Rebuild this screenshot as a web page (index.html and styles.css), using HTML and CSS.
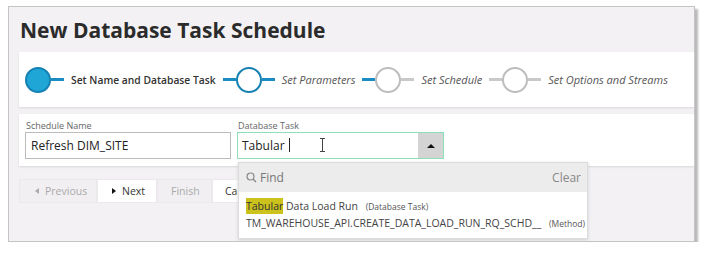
FILE: index.html
```html
<!DOCTYPE html>
<html>
<head>
<meta charset="utf-8">
<title>New Database Task Schedule</title>
<link rel="stylesheet" href="styles.css">
</head>
<body>
<div class="win">
    <h1>New Database Task Schedule</h1>

    <div class="panel steps">
        <div class="step done">
            <span class="dot"></span><span class="bar blue"></span>
            <span class="lbl">Set Name and Database Task</span>
        </div>
        <div class="step cur">
            <span class="bar blue"></span><span class="dot"></span><span class="bar blue"></span>
            <span class="lbl">Set Parameters</span>
        </div>
        <div class="step">
            <span class="bar blue"></span><span class="dot"></span><span class="bar"></span>
            <span class="lbl">Set Schedule</span>
        </div>
        <div class="step">
            <span class="bar"></span><span class="dot"></span><span class="bar"></span>
            <span class="lbl">Set Options and Streams</span>
        </div>
    </div>

    <div class="panel form">
        <div class="field">
            <label>Schedule Name</label>
            <div class="box">Refresh DIM_SITE</div>
        </div>
        <div class="field">
            <label>Database Task</label>
            <div class="box combo">
                <span class="val">Tabular<i class="caret"></i></span>
                <span class="ibeam"></span>
                <span class="btn"><i class="up"></i></span>
            </div>
        </div>
    </div>

    <div class="nav">
        <span class="nbtn off"><i class="tl"></i>Previous</span>
        <span class="nbtn"><i class="tr"></i>Next</span>
        <span class="nbtn off">Finish</span>
        <span class="nbtn">Cancel</span>
    </div>

    <div class="drop">
        <div class="find">
            <svg width="11" height="11" viewBox="0 0 11 11"><circle cx="4.5" cy="4.5" r="3.5" fill="none" stroke="#888" stroke-width="1.2"/><path d="M7 7l3 3" stroke="#888" stroke-width="1.4"/></svg>
            <span class="ph">Find</span>
            <span class="clr">Clear</span>
        </div>
        <div class="items">
            <div class="it"><mark>Tabular</mark> Data Load Run <small>(Database Task)</small></div>
            <div class="it">TM_WAREHOUSE_API.CREATE_DATA_LOAD_RUN_RQ_SCHD__ <small>(Method)</small></div>
        </div>
    </div>
</div>
</body>
</html>
```

FILE: styles.css
```css
body{ margin:0; background:#fff; font-family:"Open Sans","Noto Sans",sans-serif; color:#333;}
.win{ position:relative; margin:6px 0 0 8px; width:675px; height:234px; border:1px solid #c4c4c4; background:#f3f1f4; box-shadow:3px 3px 2px #b9b9b9; padding-left:10px;}
h1{ margin:0; padding:9px 0 0 1px; font-size:21px; line-height:28px; font-weight:bold; color:#2b2b2b;}
.panel{ background:#fff; box-shadow:0 1px 2px #d9d7da;}
.steps{ margin-top:8px; height:55px; display:flex; align-items:center; padding-left:6px;}
.step{ display:flex; align-items:center;}
.step + .step{ margin-left:7px;}
.dot{ width:22px; height:22px; border-radius:50%; border:2px solid #bdbdbd; background:#fff;}
.done .dot{ background:#20a6d6; border-color:#1581b2;}
.cur .dot{ border-color:#1581b2;}
.bar{ width:13px; height:3px; background:#c9c9c9;}
.bar.blue{ background:#1a8cc2;}
.lbl{ margin-left:7px; font-size:11px; font-style:italic; color:#555;}
.done .lbl{ font-style:normal; font-weight:600; font-size:10.3px; color:#333;}
.form{ margin-top:7px; height:52px; display:flex; padding-left:6px; gap:6px;}
.field label{ display:block; font-size:9px; color:#666; padding:5px 0 0 1px; line-height:13px;}
.box{ width:199px; height:25px; border:1px solid #bcbcbc; font-size:12px; line-height:25px; padding-left:5px; color:#222;}
.combo{ position:relative; border-color:#8ddfb8; width:201px; padding-left:4px;}
.caret{ display:inline-block; width:1px; height:14px; background:#222; margin-left:4px; vertical-align:-2px;}
.ibeam{ position:absolute; left:84px; top:6px; width:1px; height:12px; background:#444;}
.ibeam:before,.ibeam:after{ content:''; position:absolute; left:-2px; width:5px; height:1px; background:#444;}
.ibeam:before{ top:-1px;}
.ibeam:after{ bottom:-1px;}
.btn{ position:absolute; right:0; top:0; width:25px; height:25px; background:#d4d4d4; display:flex; align-items:center; justify-content:center;}
.up{ width:0; height:0; border-left:4px solid transparent; border-right:4px solid transparent; border-bottom:4px solid #111;}
.nav{ margin-top:13px; display:flex; height:24px;}
.nbtn{ display:flex; align-items:center; box-sizing:border-box; padding:0 12px; font-size:10.5px; color:#333; background:#fff; border:1px solid #ebe9ec;}
.nbtn.off{ background:#f1eff2; color:#aaa;}
.nbtn:first-child{ width:78px; padding-left:15px;}
.nbtn:nth-child(2){ width:60px; padding-left:14px;}
.nbtn:nth-child(3){ width:55px; padding-left:13px;}
.tl{ width:0; height:0; border-top:3.5px solid transparent; border-bottom:3.5px solid transparent; border-right:4px solid #aaa; margin-right:6px;}
.tr{ width:0; height:0; border-top:3.5px solid transparent; border-bottom:3.5px solid transparent; border-left:4px solid #111; margin-right:6px;}
.drop{ position:absolute; left:229px; top:155px; width:348px; background:#fff; border:1px solid #dcdcdc; box-shadow:0 1px 3px #cfcfcf;}
.find{ height:29px; background:#ececec; display:flex; align-items:center; padding:0 6px 0 7px; font-size:12px;}
.ph{ margin-left:3px; color:#777;}
.clr{ margin-left:auto; color:#888;}
.items{ padding:6px 0 6px 7px;}
.it{ font-size:10.5px; line-height:16px; color:#444; white-space:nowrap;}
mark{ background:#cbc21c; color:#333; padding:1px 0;}
small{ font-size:8.5px; color:#555; margin-left:5px;}
```
